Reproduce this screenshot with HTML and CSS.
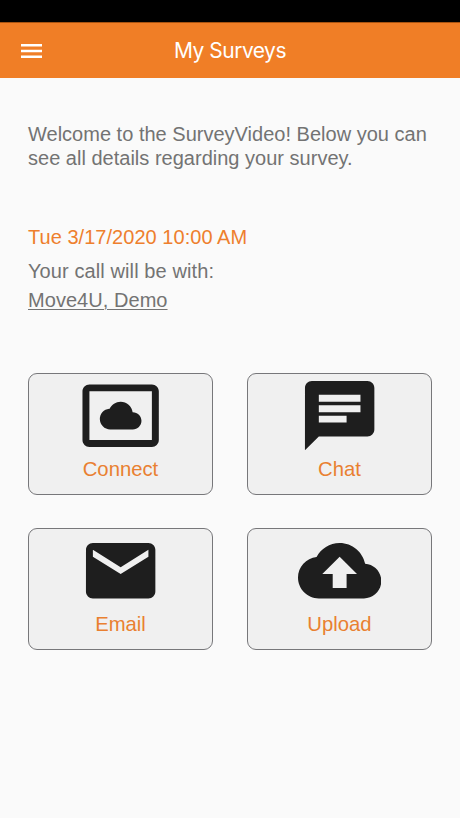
FILE: index.html
```html
<!DOCTYPE html>
<html lang="en">
<head>
    <meta charset="UTF-8">
    <meta name="viewport" content="width=device-width, initial-scale=1.0">
    <title>My Surveys</title>
    <link rel="stylesheet" href="styles.css">
</head>
<body>

    <div class="status-bar"></div>

    <header class="navbar">
        <button class="menu-btn" aria-label="Menu">
            <svg viewBox="0 0 21 14"><path d="M0 0h21v2.5H0zM0 5.8h21v2.4H0zM0 11.5h21V14H0z"/></svg>
        </button>
        <h1>My Surveys</h1>
    </header>

    <main class="content">
        <p class="welcome">Welcome to the SurveyVideo! Below you can <br>see all details regarding your survey.</p>

        <div class="appointment">
            <p class="date">Tue 3/17/2020 10:00 AM</p>
            <p class="call-label">Your call will be with:</p>
            <a class="agent">Move4U, Demo</a>
        </div>

        <div class="actions">
            <button class="card">
                <svg viewBox="0 0 24 24"><path d="M9 16h6.5c1.38 0 2.5-1.12 2.5-2.5S16.88 11 15.5 11h-.05c-.24-1.69-1.69-3-3.45-3-1.4 0-2.6.83-3.16 2.02h-.16C7.17 10.18 6 11.45 6 13c0 1.66 1.34 3 3 3zM21 3H3c-1.1 0-2 .9-2 2v14c0 1.1.9 2 2 2h18c1.1 0 2-.9 2-2V5c0-1.1-.9-2-2-2zm0 16.01H3V4.99h18v14.02z"/></svg>
                <span>Connect</span>
            </button>
            <button class="card">
                <svg viewBox="0 0 24 24"><path d="M20 2H4c-1.1 0-1.99.9-1.99 2L2 22l4-4h14c1.1 0 2-.9 2-2V4c0-1.1-.9-2-2-2zM6 9h12v2H6V9zm8 5H6v-2h8v2zm4-6H6V6h12v2z"/></svg>
                <span>Chat</span>
            </button>
            <button class="card">
                <svg viewBox="0 0 24 24"><path d="M20 4H4c-1.1 0-1.99.9-1.99 2L2 18c0 1.1.9 2 2 2h16c1.1 0 2-.9 2-2V6c0-1.1-.9-2-2-2zm0 4l-8 5-8-5V6l8 5 8-5v2z"/></svg>
                <span>Email</span>
            </button>
            <button class="card">
                <svg viewBox="0 0 24 24"><path d="M19.35 10.04C18.67 6.59 15.64 4 12 4 9.11 4 6.6 5.64 5.35 8.04 2.34 8.36 0 10.91 0 14c0 3.31 2.69 6 6 6h13c2.76 0 5-2.24 5-5 0-2.64-2.05-4.78-4.65-4.96zM14 13v4h-4v-4H7l5-5 5 5h-3z"/></svg>
                <span>Upload</span>
            </button>
        </div>
    </main>

</body>
</html>
```
FILE: styles.css
```css
* {
    box-sizing: border-box;
}

body {
    font-family: "Liberation Sans", Arial, sans-serif;
    font-size: 20px;
    background-color: #fafafa;
    color: #737373;
    margin: 0;
}

p {
    margin: 0;
}

.status-bar {
    height: 22px;
    background-color: #000;
}

.navbar {
    display: grid;
    grid-template-columns: 42px 1fr 42px;
    align-items: center;
    height: 56px;
    background-color: #f07e26;
    border-top: 1px solid #a85310;
}

.menu-btn {
    padding: 0 0 0 21px;
    border: none;
    background: none;
}

.menu-btn svg {
    display: block;
    width: 21px;
    height: 14px;
    fill: #fff;
}

h1 {
    margin: 0;
    font-family: Inter, sans-serif;
    font-size: 21px;
    font-weight: 400;
    letter-spacing: -0.5px;
    text-align: center;
    color: #fff;
}

.content {
    padding: 44px 28px 0;
}

.welcome {
    line-height: 24px;
    white-space: nowrap;
    letter-spacing: 0.01px;
}

.appointment {
    margin-top: 52px;
}

.date {
    line-height: 30px;
    letter-spacing: 0.04px;
    color: #ee7f2d;
}

.call-label {
    margin-top: 5px;
    line-height: 29px;
    letter-spacing: 0.1px;
}

.agent {
    display: inline-block;
    line-height: 29px;
    letter-spacing: 0.05px;
    text-decoration: underline;
    text-decoration-thickness: 1px;
    text-underline-offset: 2px;
}

.actions {
    display: grid;
    grid-template-columns: 185px 185px;
    justify-content: space-between;
    row-gap: 33.5px;
    margin-top: 57.5px;
}

.card {
    display: flex;
    flex-direction: column;
    align-items: center;
    height: 122px;
    padding: 0;
    border: 1px solid #77777a;
    border-radius: 9px;
    background-color: #f0f0f0;
    font: inherit;
    font-size: 20.3px;
    color: #e98031;
}

.card svg {
    width: 83.3px;
    height: 83.3px;
    flex-shrink: 0;
    fill: #1e1e1e;
}

.card span {
    line-height: 24px;
}
```
